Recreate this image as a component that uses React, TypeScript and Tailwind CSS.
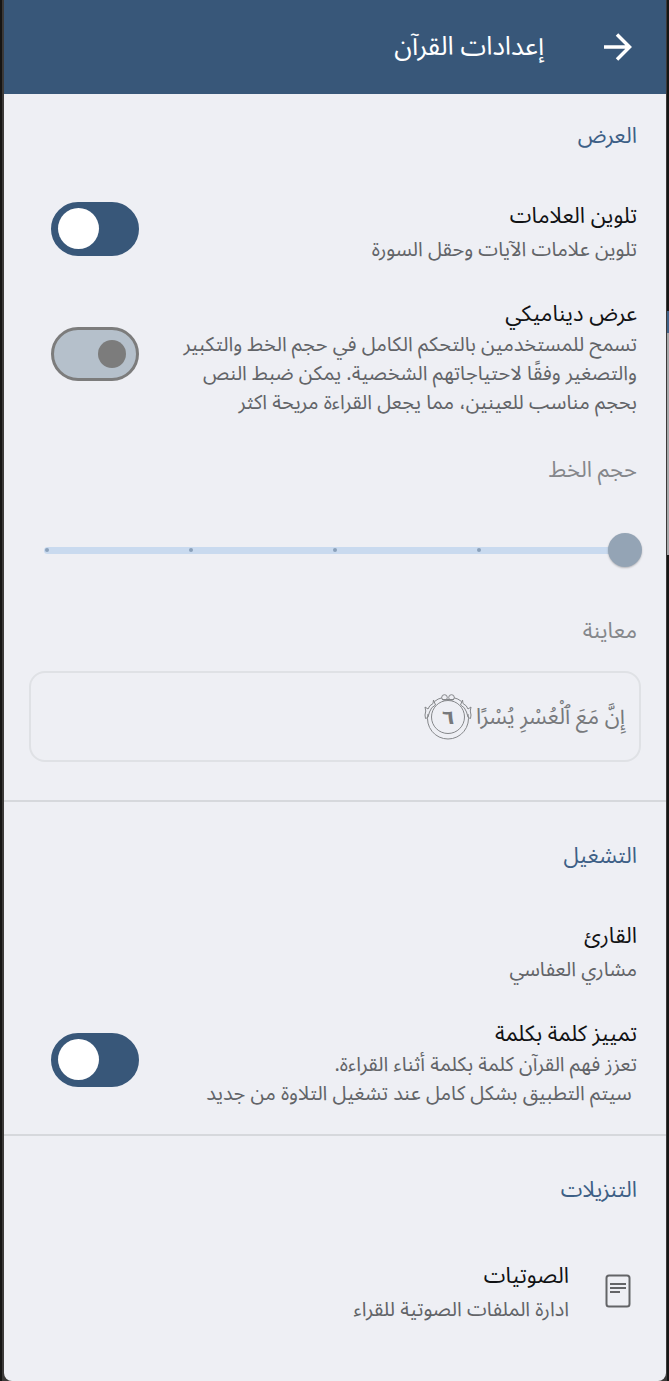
import React, { useState } from "react";

type ToggleProps = { id: string; defaultChecked?: boolean };

function Toggle({ id, defaultChecked = false }: ToggleProps) {
  const [on, setOn] = useState(defaultChecked);
  return (
    <input
      id={id}
      type="checkbox"
      role="switch"
      checked={on}
      onChange={(e) => setOn(e.target.checked)}
      className="mb-2 flex h-[54px] w-[88px] shrink-0 cursor-pointer appearance-none items-center rounded-full border-[3px] border-[#7c7c7c] bg-[#b5c0cb] px-[10px] before:block before:size-[28px] before:rounded-full before:bg-[#7c7c7c] before:content-[''] checked:justify-end checked:border-[#385779] checked:bg-[#385779] checked:px-1 checked:before:size-[41px] checked:before:bg-white"
    />
  );
}

function SectionTitle({ children }: { children: React.ReactNode }) {
  return <h2 className="px-[29px] text-[22px] leading-8 text-[#3d5f86]">{children}</h2>;
}

type RowProps = {
  id: string;
  title: string;
  lines: string[];
  checked?: boolean;
};

function ToggleRow({ id, title, lines, checked }: RowProps) {
  return (
    <div className="flex items-center justify-between pr-[29px] pl-[47px]">
      <label htmlFor={id} className="flex cursor-pointer flex-col">
        <span className="text-[22px] leading-8 text-[#111214]">{title}</span>
        <span className={lines.length === 1 ? "pt-1" : "pt-px"}>
          {lines.map((line) => (
            <span key={line} className="block text-[20px] leading-[29px] whitespace-nowrap text-[#626468]">
              {line}
            </span>
          ))}
        </span>
      </label>
      <Toggle id={id} defaultChecked={checked} />
    </div>
  );
}

function VerseMarker() {
  return (
    <svg viewBox="0 0 48 46" className="h-[46px] w-12 shrink-0" fill="none" stroke="#85878a" strokeWidth="1">
      <circle cx="24" cy="23" r="16.5" />
      <path d="M18 3.8 Q14 4.500 10.500 7.500 M4 20 A20.500 20.500 0 1 0 44 20 M37.500 7.500 Q34 4.500 30 3.800 M18 5.500H30" />
      <circle cx="20.5" cy="3.500" r="2.800" />
      <circle cx="27.5" cy="3.500" r="2.800" />
      <path d="M9.500 6L9 9.500Q5 11.500 4 15L1 13Q2.500 17 1 21L1.500 24.500L4 23.500M9.500 6L11.500 11Q7 13 5.500 18L4 23" />
      <path d="M38.500 6L39 9.500Q43 11.500 44 15L47 13Q45.500 17 47 21L46.500 24.500L44 23.500M38.500 6L36.500 11Q41 13 42.500 18L44 23" />
      <text x="24" y="30" textAnchor="middle" fontSize="20" fontWeight="700" fontFamily="DejaVu Sans, sans-serif" fill="#77797c" stroke="none">
        ٦
      </text>
    </svg>
  );
}

function FontSizeSlider() {
  const [size, setSize] = useState(0);
  return (
    <div className="relative mx-6 mt-[47px] flex h-[34px] items-center">
      <div className="absolute inset-x-4 flex h-[7px] items-center justify-between rounded-full bg-[#c9daef] px-px">
        {[0, 1, 2, 3, 4].map((tick) => (
          <span key={tick} className="size-1 rounded-full bg-[#8ba1bb]" />
        ))}
      </div>
      <input
        id="font-size"
        type="range"
        min={0}
        max={4}
        value={size}
        onChange={(e) => setSize(Number(e.target.value))}
        className="relative h-[34px] w-full cursor-pointer appearance-none bg-transparent [&::-webkit-slider-thumb]:size-[34px] [&::-webkit-slider-thumb]:appearance-none [&::-webkit-slider-thumb]:rounded-full [&::-webkit-slider-thumb]:bg-[#94a4b5] [&::-webkit-slider-thumb]:shadow-[0_1px_2px_rgba(0,0,0,0.25)]"
      />
    </div>
  );
}

export default function App() {
  return (
    <div dir="rtl" className="flex min-h-screen bg-[#161514] font-['Noto_Sans_Arabic','DejaVu_Sans',sans-serif]">
      <div aria-hidden="true" className="flex w-[2px] flex-col">
        <span className="h-[311px]" />
        <span className="h-[22px] bg-[#3f6187]" />
        <span className="h-[222px] bg-[#a6a7a9]" />
      </div>
      <div className="flex min-w-0 grow border-l-2 border-[#161514] bg-[#3b3938] pr-px pl-[2px]">
        <main className="min-w-0 grow overflow-hidden rounded-b-lg bg-[#eeeff4] pb-14">
          <header className="flex h-[94px] items-center gap-[60px] bg-[#385779] px-[34px] text-white">
            <button type="button" aria-label="رجوع" className="cursor-pointer">
              <svg viewBox="0 0 28 28" className="size-7" fill="none" stroke="currentColor" strokeWidth="3.500">
                <path d="M0 14H25M13 1.500L25.500 14L13 26.500" />
              </svg>
            </button>
            <h1 className="text-[26px] leading-9">إعدادات القرآن</h1>
          </header>

          <section className="pt-[26px] pb-[38px]">
            <SectionTitle>العرض</SectionTitle>
            <div className="mt-12 flex flex-col gap-[33px]">
              <ToggleRow id="color-marks" title="تلوين العلامات" lines={["تلوين علامات الآيات وحقل السورة"]} checked />
              <ToggleRow
                id="dynamic-view"
                title="عرض ديناميكي"
                lines={[
                  "تسمح للمستخدمين بالتحكم الكامل في حجم الخط والتكبير",
                  "والتصغير وفقًا لاحتياجاتهم الشخصية. يمكن ضبط النص",
                  "بحجم مناسب للعينين، مما يجعل القراءة مريحة اكثر",
                ]}
              />
            </div>
            <label htmlFor="font-size" className="mt-9 block px-[29px] text-[22px] leading-8 text-[#85878b]">
              حجم الخط
            </label>
            <FontSizeSlider />
            <h3 className="mt-12 px-[29px] text-[22px] leading-8 text-[#85878b]">معاينة</h3>
            <div className="mx-[25px] mt-6 flex h-[91px] items-center gap-1 rounded-[16px] border-2 border-[#dfe1e5] px-[14px]">
              <p className="text-[22px] leading-[60px] whitespace-nowrap text-[#77797c]">إِنَّ مَعَ ٱلْعُسْرِ يُسْرًا</p>
              <VerseMarker />
            </div>
          </section>

          <section className="border-t-2 border-[#d6d8dc] pt-[38px] pb-[25px]">
            <SectionTitle>التشغيل</SectionTitle>
            <button type="button" className="mt-12 flex w-full cursor-pointer flex-col items-start gap-1 px-[29px] text-start">
              <span className="text-[22px] leading-8 text-[#111214]">القارئ</span>
              <span className="text-[20px] leading-[29px] text-[#626468]">مشاري العفاسي</span>
            </button>
            <div className="mt-[33px]">
              <ToggleRow
                id="word-highlight"
                title="تمييز كلمة بكلمة"
                lines={["تعزز فهم القرآن كلمة بكلمة أثناء القراءة.", "\u00a0سيتم التطبيق بشكل كامل عند تشغيل التلاوة من جديد"]}
                checked
              />
            </div>
          </section>

          <section className="border-t-2 border-[#d6d8dc] pt-[38px]">
            <SectionTitle>التنزيلات</SectionTitle>
            <button type="button" className="mt-[54px] flex w-full cursor-pointer items-center gap-9 px-[35px] text-start">
              <svg viewBox="0 0 26 34" className="mb-1 h-[34px] w-[26px] shrink-0" fill="none" stroke="#636467" strokeWidth="2">
                <rect x="1.500" y="1.500" width="23" height="31" rx="2.500" />
                <path d="M5 10H21M5 14H21M5 18H15" />
              </svg>
              <span className="flex flex-col gap-1">
                <span className="text-[22px] leading-8 text-[#111214]">الصوتيات</span>
                <span className="text-[20px] leading-[29px] text-[#626468]">ادارة الملفات الصوتية للقراء</span>
              </span>
            </button>
          </section>
        </main>
      </div>
    </div>
  );
}
